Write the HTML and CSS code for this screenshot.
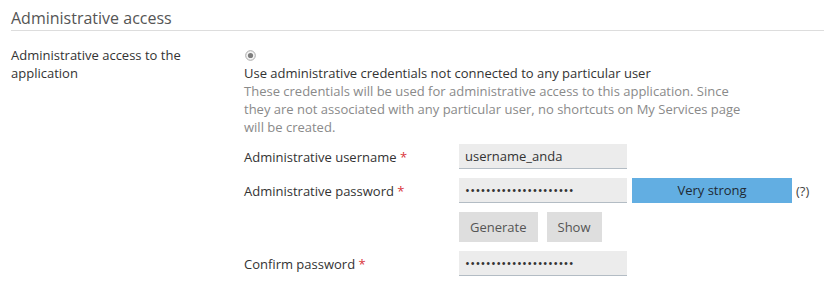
FILE: index.html
```html
<!DOCTYPE html>
<html lang="en">
<head>
<meta charset="utf-8">
<title>Administrative access</title>
<link rel="stylesheet" href="styles.css">
</head>
<body>
<div class="page">
  <h2 class="section-title">Administrative access</h2>
  <div class="form-row">
    <div class="row-label">Administrative access to the application</div>
    <div class="row-body">
      <div class="radio-line">
        <svg class="radio" width="11" height="11" viewBox="0 0 11 11" aria-hidden="true">
          <circle cx="5.5" cy="5.5" r="4.8" fill="#f4f4f4" stroke="#a9a9a9" stroke-width="1"/>
          <circle cx="5.5" cy="5.5" r="2.6" fill="#7d7d7d"/>
        </svg>
      </div>
      <div class="option-title">Use administrative credentials not connected to any particular user</div>
      <div class="option-desc">These credentials will be used for administrative access to this application. Since they are not associated with any particular user, no shortcuts on My Services page will be created.</div>
      <div class="fields">
        <div class="field">
          <label class="field-label">Administrative username <span class="req">*</span></label>
          <input class="text-input" type="text" value="username_anda">
        </div>
        <div class="field">
          <label class="field-label">Administrative password <span class="req">*</span></label>
          <input class="text-input pw" type="password" value="aaaaaaaaaaaaaaaaaaaaa">
          <div class="strength">Very strong</div>
          <span class="help">(?)</span>
        </div>
        <div class="field">
          <span class="field-label"></span>
          <div class="buttons">
            <button class="btn" type="button">Generate</button>
            <button class="btn" type="button">Show</button>
          </div>
        </div>
        <div class="field">
          <label class="field-label">Confirm password <span class="req">*</span></label>
          <input class="text-input pw" type="password" value="aaaaaaaaaaaaaaaaaaaaa">
        </div>
      </div>
    </div>
  </div>
</div>
</body>
</html>
```

FILE: styles.css
```css
html, body {
  margin: 0;
  padding: 0;
  background: #ffffff;
}

body {
  font-family: "Open Sans", "Noto Sans", sans-serif;
  font-size: 13px;
  line-height: 18px;
  color: #333333;
}

.page {
  padding-left: 11px;
}

.section-title {
  margin: 0;
  padding-top: 7px;
  font-size: 16px;
  line-height: 23px;
  font-weight: 400;
  color: #555555;
  border-bottom: 1px solid #dddddd;
}

.form-row {
  display: grid;
  grid-template-columns: 233px 1fr;
  margin-top: 15px;
}

.row-label {
  width: 200px;
  color: #333333;
}

.radio-line {
  height: 18px;
  display: flex;
  align-items: center;
}

.radio {
  display: block;
  margin-left: 1px;
}

.option-title {
  color: #333333;
}

.option-desc {
  width: 502px;
  color: #8a8a8a;
}

.fields {
  margin-top: 8px;
  display: flex;
  flex-direction: column;
  gap: 9px;
}

.field {
  display: flex;
  align-items: center;
}

.field-label {
  width: 215px;
  flex: none;
  color: #333333;
}

.req {
  color: #d9353a;
}

.text-input {
  box-sizing: border-box;
  width: 168px;
  height: 25px;
  margin: 0;
  padding: 0 6px;
  border: none;
  border-bottom: 1px solid #b3bcc4;
  background: #ececec;
  font-family: "Open Sans", "Noto Sans", sans-serif;
  font-size: 13px;
  color: #333333;
  outline: none;
}

.pw {
  letter-spacing: 0.3px;
}

.strength {
  width: 160px;
  height: 25px;
  margin-left: 5px;
  background: #62aee2;
  color: #1f2a33;
  text-align: center;
  line-height: 25px;
}

.help {
  margin-left: 4px;
  color: #444444;
}

.buttons {
  display: flex;
  gap: 9px;
}

.btn {
  height: 30px;
  margin: 0;
  padding: 0 11px;
  border: none;
  background: #dedede;
  font-family: "Open Sans", "Noto Sans", sans-serif;
  font-size: 13px;
  color: #555555;
  cursor: pointer;
}
```
